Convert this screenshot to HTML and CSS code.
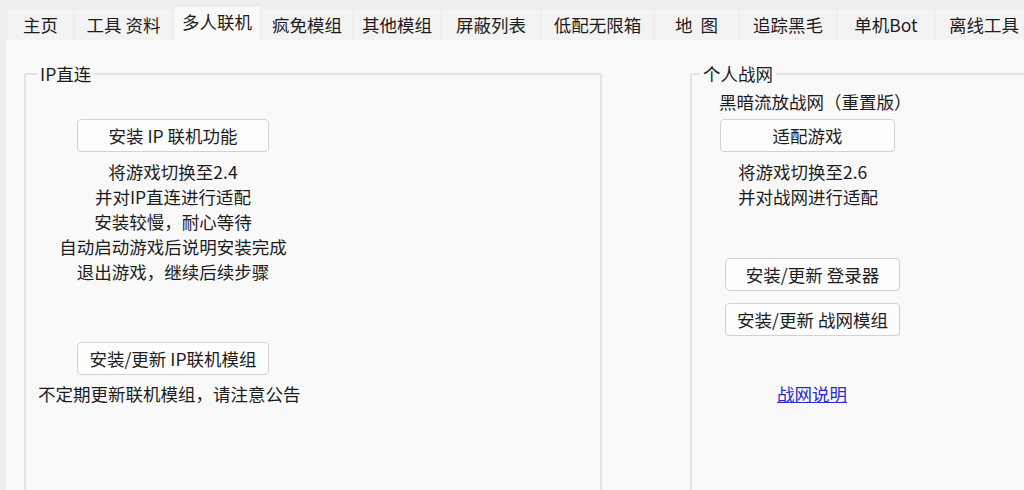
FILE: index.html
```html
<!DOCTYPE html>
<html lang="zh-CN">
<head>
  <meta charset="UTF-8" />
  <meta name="viewport" content="width=device-width, initial-scale=1.0"/>
  <title>多人联机</title>
  <link rel="stylesheet" href="styles.css">
</head>
<body>
  <nav class="tabs">
    <div class="tab">主页</div>
    <div class="tab">工具 资料</div>
    <div class="tab active">多人联机</div>
    <div class="tab">疯免模组</div>
    <div class="tab">其他模组</div>
    <div class="tab">屏蔽列表</div>
    <div class="tab">低配无限箱</div>
    <div class="tab">地&nbsp; 图</div>
    <div class="tab">追踪黑毛</div>
    <div class="tab">单机Bot</div>
    <div class="tab">离线工具</div>
  </nav>

  <main class="panel">
    <fieldset class="group group-ip">
      <legend>IP直连</legend>
      <div class="ip-col">
        <button class="btn btn-ip">安装 IP 联机功能</button>
        <p class="lines centered">
          将游戏切换至2.4<br>
          并对IP直连进行适配<br>
          安装较慢，耐心等待<br>
          自动启动游戏后说明安装完成<br>
          退出游戏，继续后续步骤
        </p>
        <button class="btn btn-ip btn-mod">安装/更新 IP联机模组</button>
        <p class="notice">不定期更新联机模组，请注意公告</p>
      </div>
    </fieldset>

    <fieldset class="group group-bn">
      <legend>个人战网</legend>
      <div class="bn-col">
        <p class="sub">黑暗流放战网（重置版）</p>
        <button class="btn btn-bn btn-adapt">适配游戏</button>
        <p class="lines bn-lines">
          将游戏切换至2.6<br>
          并对战网进行适配
        </p>
        <button class="btn btn-bn btn-login">安装/更新 登录器</button>
        <button class="btn btn-bn btn-bnmod">安装/更新 战网模组</button>
        <a class="help" href="#">战网说明</a>
      </div>
    </fieldset>
  </main>
</body>
</html>
```

FILE: styles.css
```css
body, html {
  margin: 0;
  padding: 0;
  height: 100%;
  overflow: hidden;
}

body {
  background-color: #eeeeee;
  color: #1c1c1c;
  font-family: "Noto Sans CJK SC", "Noto Sans", sans-serif;
  font-size: 17.5px;
}

.tabs {
  display: grid;
  grid-template-columns: 65px 97px 86px 90px 86px 98px 111px 83px 96px 96px 96px;
  column-gap: 2px;
  align-items: end;
  height: 40px;
  padding-left: 8px;
}

.tab {
  display: flex;
  align-items: center;
  justify-content: center;
  height: 30px;
  padding-bottom: 1px;
  box-sizing: border-box;
  background-color: #f3f3f3;
  line-height: 1;
  white-space: nowrap;
}

.tab.active {
  height: 33px;
  padding-bottom: 4px;
  background-color: #f9f9f9;
}

.panel {
  display: flex;
  gap: 88px;
  height: 450px;
  margin-left: 6px;
  padding: 22px 0 0 18px;
  box-sizing: border-box;
  background-color: #f9f9f9;
  overflow: hidden;
}

.group {
  flex-shrink: 0;
  margin: 0;
  padding: 0;
  min-width: 0;
  height: 460px;
  box-sizing: border-box;
  border: 2px solid #e3e3e3;
  border-radius: 2px;
}

.group legend {
  margin-left: 11px;
  padding: 0 3px;
  line-height: 24px;
}

.group-ip {
  width: 578px;
}

.group-bn {
  width: 400px;
}

.group-bn legend {
  margin-left: 8px;
}

p {
  margin: 0;
}

.btn {
  height: 33px;
  padding: 0;
  background-color: #fdfdfd;
  border: 1px solid #d2d2d2;
  border-radius: 4px;
  color: #1c1c1c;
  font-family: inherit;
  font-size: 17.5px;
  line-height: 1;
}

.ip-col {
  display: flex;
  flex-direction: column;
  align-items: center;
  width: 294px;
  margin-top: 33px;
}

.btn-ip {
  width: 192px;
}

.lines {
  margin-top: 7px;
  line-height: 25px;
}

.centered {
  text-align: center;
}

.btn-mod {
  margin-top: 58px;
}

.notice {
  align-self: flex-start;
  margin: 7px 0 0 12px;
  line-height: 24px;
  white-space: nowrap;
}

.bn-col {
  display: flex;
  flex-direction: column;
  align-items: flex-start;
}

.sub {
  margin: 4px 0 0 27px;
  line-height: 24px;
}

.btn-bn {
  width: 175px;
}

.btn-adapt {
  margin: 5px 0 0 28px;
}

.bn-lines {
  margin-left: 46px;
}

.btn-login {
  margin: 49px 0 0 33px;
}

.btn-bnmod {
  margin: 12px 0 0 33px;
}

.help {
  margin: 46px 0 0 85px;
  line-height: 24px;
  color: #2a2ad0;
}
```
